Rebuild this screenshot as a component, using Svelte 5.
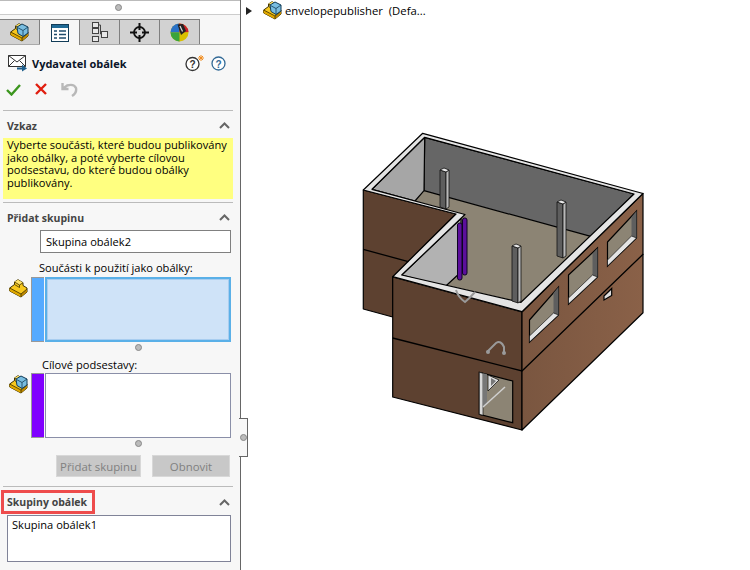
<script>
	const rows = ['Vyberte součásti, které budou publikovány', 'jako obálky, a poté vyberte cílovou', 'podsestavu, do které budou obálky', 'publikovány.']

	const pillars = [
		[440, 168, 449, 208],
		[557, 200, 566, 257],
		[512, 244, 521, 302]
	]

	const windows = [
		[529.5, 320, 558.5, 287, 315, 342],
		[568.5, 275, 597.5, 248, 277, 304],
		[607.5, 242, 636.5, 211, 238, 266]
	]

	const pts = (...p) => p.join(' ')
</script>

{#snippet block(cube)}
	<svg class="part" width="19" height="19" viewBox="0 0 19 19">
		<path d="M.7 9 L5.500 5.500 L5.500 3 L9 .7 L14 3.700 L14 6.500 L18 9 L18 13 L12 18 L.7 12 Z" fill="#f7c81e" stroke="#3d3000"/>
		<path d="M5.500 3 L10.500 6 L14 3.700 L9 .7 Z" fill="#ffe36a"/>
		<path d="M.7 9 L12 15 L12 18 L.7 12 Z" fill="#e0a800"/>
		<path d="M12 15 L18 10 L18 13 L12 18 Z" fill="#c08a00"/>
		<path d="M.7 9 L12 15 L18 10 M12 15 V18 M5.500 5.500 L10.500 8.500 V6 M5.500 3 L10.500 6 L14 3.700" fill="none" stroke="#3d3000" stroke-width=".8"/>
		{#if cube}
			<path d="M7 4 L12 1 L18 4 V10 L13 13.500 L8 10.500 Z" fill="#79bde0" stroke="#123c58"/>
			<path d="M7.500 4.500 L13 7.500 L18 4 M13 7.500 V13.500" fill="none" stroke="#123c58" stroke-width=".8"/>
		{/if}
	</svg>
{/snippet}

{#snippet chevron()}
	<svg class="chev" width="11" height="7" viewBox="0 0 11 7"><path d="M1 6 L5.500 1.500 L10 6" fill="none" stroke="#666" stroke-width="2"/></svg>
{/snippet}

{#snippet mate(x, y)}
	<path d="M{x} {y + 12} L{x + 9} {y + 3} Q{x + 14} {y} {x + 17} {y + 7} L{x + 17} {y + 12}" fill="none" stroke="#9a9a9a" stroke-width="2"/>
	<circle cx={x + 1} cy={y + 12} r="2" fill="#9a9a9a"/>
	<circle cx={x + 17} cy={y + 13} r="2" fill="#9a9a9a"/>
{/snippet}

<div class="app">
	<aside class="panel">
		<div class="grip"><span class="dot"></span></div>

		<div class="tabs">
			<div class="tab">
				{@render block(true)}
			</div>
			<div class="tab active">
				<svg width="18" height="18" viewBox="0 0 18 18">
					<rect x=".5" y=".5" width="17" height="17" fill="#fff" stroke="#123c58"/>
					<rect x="1" y="1" width="16" height="3" fill="#1f6a96"/>
					<path d="M3 7H6M8 7H15M3 10.500H6M8 10.500H15M3 14H6M8 14H15" stroke="#1f4c6c" stroke-width="1.600"/>
				</svg>
			</div>
			<div class="tab">
				<svg width="16" height="20" viewBox="0 0 16 20" fill="#e8e8e8" stroke="#444">
					<rect x=".5" y=".5" width="6" height="5"/>
					<rect x=".5" y="6.500" width="6" height="5"/>
					<rect x=".5" y="14.500" width="6" height="5"/>
					<rect x="9.500" y="9.500" width="6" height="6"/>
					<path d="M6.500 3H8.500V12H9.500" fill="none"/>
				</svg>
			</div>
			<div class="tab">
				<svg width="19" height="19" viewBox="0 0 19 19" fill="none" stroke="#111">
					<circle cx="9.500" cy="9.500" r="5.500" stroke-width="1.800"/>
					<path d="M9.500 0V7M9.500 12V19M0 9.500H7M12 9.500H19" stroke-width="2"/>
				</svg>
			</div>
			<div class="tab">
				<svg width="19" height="19" viewBox="0 0 19 19">
					<circle cx="9.500" cy="9.500" r="9" fill="#d8c000"/>
					<path d="M9.500 9.500 L.5 9.500 A9 9 0 0 1 9 .5 Z" fill="#2a72c8"/>
					<path d="M9.500 9.500 L9 .5 A9 9 0 0 1 18.500 9 Z" fill="#c81e28"/>
					<path d="M9.500 9.500 L.5 9.500 A9 9 0 0 0 9.500 18.500 Z" fill="#3aa43a"/>
					<path d="M7.500 1.500 L13 1 L16 8 L11 12 Z" fill="#222"/>
					<path d="M10 3 L12.500 8.500" stroke="#ddd" stroke-width="1.200"/>
				</svg>
			</div>
		</div>

		<header class="title">
			<svg width="20" height="18" viewBox="0 0 20 18">
				<path d="M.5 1.500H17.500V12.500H.5Z" fill="#fff" stroke="#333"/>
				<path d="M.5 1.500L9 8L17.500 1.500M.5 12.500L6.500 6.500M17.500 12.500L11.500 6.500" fill="none" stroke="#333"/>
				<path d="M9 13.500H14V10.500L19 14.500L14 17.500V15.500H9Z" fill="#1f5f8c"/>
			</svg>
			<h1>Vydavatel obálek</h1>
			<span class="help">
				<svg width="20" height="18" viewBox="0 0 20 18">
					<circle cx="7.500" cy="10" r="6.500" fill="#fff" stroke="#333" stroke-width="1.300"/>
					<text x="7.500" y="14" class="q dark">?</text>
					<path d="M16 1V7M13 4H19M14 2L18 6M18 2L14 6" stroke="#f08c1e"/>
				</svg>
				<svg width="15" height="15" viewBox="0 0 15 15">
					<circle cx="7.500" cy="7.500" r="6.500" fill="#fff" stroke="#336a96" stroke-width="1.300"/>
					<text x="7.500" y="11.500" class="q blue">?</text>
				</svg>
			</span>
		</header>

		<div class="actions">
			<svg width="15" height="13" viewBox="0 0 15 13"><path d="M1 7 L5.500 11.500 L14 2" fill="none" stroke="#3c961e" stroke-width="2.400"/></svg>
			<svg width="12" height="12" viewBox="0 0 12 12"><path d="M1 1 L11 11 M11 1 L1 11" fill="none" stroke="#e01e10" stroke-width="2.400"/></svg>
			<svg width="17" height="15" viewBox="0 0 17 15"><path d="M1.500 1V7H7.500M2 6.500 L6 3.500 Q13 1.500 15 6 Q16 11 11 14" fill="none" stroke="#b8b8b8" stroke-width="2.400"/></svg>
		</div>

		<section class="sec first">
			<div class="head top"><span>Vzkaz</span>{@render chevron()}</div>
			<div class="note">
				{#each rows as r}<div>{r}</div>{/each}
			</div>
		</section>

		<section class="sec add">
			<div class="head"><span>Přidat skupinu</span>{@render chevron()}</div>
			<div class="field">Skupina obálek2</div>

			<div class="label">Součásti k použití jako obálky:</div>
			<div class="pick">
				{@render block(false)}
				<i class="swatch sky"></i>
				<div class="list focus"></div>
			</div>
			<div class="sash"><span class="dot"></span></div>

			<div class="label second">Cílové podsestavy:</div>
			<div class="pick">
				{@render block(true)}
				<i class="swatch violet"></i>
				<div class="list"></div>
			</div>
			<div class="sash"><span class="dot"></span></div>

			<div class="buttons">
				<button disabled class="b1">Přidat skupinu</button>
				<button disabled class="b2">Obnovit</button>
			</div>
		</section>

		<section class="sec last">
			<div class="head">
				<span class="mark">Skupiny obálek</span>{@render chevron()}
			</div>
			<div class="result">Skupina obálek1</div>
		</section>

		<div class="handle"><span class="dot"></span></div>
	</aside>

	<main class="view">
		<div class="tree">
			<svg width="6" height="8" viewBox="0 0 6 8"><path d="M0 0 L6 4 L0 8Z" fill="#222"/></svg>
			{@render block(true)}
			<span>envelopepublisher&nbsp; (Defa...</span>
		</div>

		<svg class="model" width="509" height="570" viewBox="241 0 509 570">
			<defs>
				<linearGradient id="side" x1="0" y1="0" x2="1" y2="0">
					<stop offset="0" stop-color="#7a5640"/>
					<stop offset="1" stop-color="#8a6148"/>
				</linearGradient>
			</defs>
			<g stroke="#000" stroke-width="1.200" stroke-linejoin="round">
				<polygon points="363.300,190 456,214 392.700,277 392.700,317 363.300,309" fill="#5d4130"/>
				<polygon points="392.700,277 522,312 522,430 392.700,397" fill="#5d4130"/>
				<polygon points="522,312 643,193.500 643,312.700 522,430" fill="url(#side)"/>

				<polygon points="415,201 424,190.700 591.700,236.700 634,194 521,302.300 401.700,275 465,214.500" fill="#8c8474" stroke="none"/>
				<polygon points="424.700,137.300 634,194 591.700,236.700 424,190.700" fill="#666"/>
				<polygon points="424.700,137.300 372,189.300 415,201 424,190.700" fill="#a6a6a6"/>
				<polygon points="461,218.500 401.700,275 445,286.700 461,272" fill="#b2b2b2"/>

				<path fill-rule="evenodd" fill="#e4e4e4" d="M422.700 133.300 L643 193.500 L522 311.700 L392.700 276.700 L456 214 L363.300 190 Z M424.700 137.300 L372 189.300 L465 214.500 L401.700 275 L521 302.300 L634 194 Z"/>
			</g>

			<g stroke="#000" stroke-width="1">
				<path d="M363.300 249.300 L408.300 261.700 M392.700 338 L522 371 L643.300 254" fill="none" stroke-width="1.300"/>
			</g>

			{#each pillars as [x1, y1, x2, y2]}
				<g stroke="#111" stroke-width=".8">
					<polygon points={pts(x1, y1 + 2, x1 + 6, y1 + 4, x1 + 6, y2 + 1, x1, y2 - 1)} fill="#5e5e5e"/>
					<polygon points={pts(x1 + 6, y1 + 4, x2, y1 + 2, x2, y2 - 1, x1 + 6, y2 + 1)} fill="#b8b8b8"/>
					<polygon points={pts(x1, y1 + 2, x1 + 4, y1, x2, y1 + 2, x1 + 6, y1 + 4)} fill="#e8e8e8"/>
				</g>
			{/each}

			<g stroke="#0c0420" stroke-width="1">
				<rect x="462.500" y="218" width="4.500" height="57" rx="2" fill="#5c0f9c"/>
				<rect x="457.500" y="223" width="4.500" height="57" rx="2" fill="#5c0f9c"/>
			</g>

			{#each windows as [x1, y1, x2, y2, y3, y4]}
				<polygon points={pts(x1, y1, x2, y2, x2, y3, x1, y4)} fill="#8c8474" stroke="#000" stroke-width="1.200"/>
				<polygon points={pts(x2 - 5, y2 + 6, x2, y2, x2, y3, x2 - 5, y3 - 1)} fill="#5e5e5e"/>
				<polygon points={pts(x1, y4, x2, y3, x2 - 5, y3 - 2, x1, y4 - 6)} fill="#e4e4e4" stroke="#000" stroke-width=".6"/>
			{/each}

			<polygon points="604,296 611.700,288.500 611.700,295.500 604,300" fill="#ddd" stroke="#000" stroke-width="1.200"/>

			<polygon points="479.300,372.300 512.700,381 512.700,422.700 479.300,414.300" fill="#8c8474" stroke="#000" stroke-width="1.200"/>
			<polygon points="479.300,372.300 483,373.300 483,415.300 479.300,414.300" fill="#d8d8d8" stroke="#000" stroke-width=".6"/>
			<polygon points="483,373.300 487,374.300 487,404 483,408" fill="#777"/>
			<polygon points="488,375 488,391 499,380" fill="#ddd" stroke="#000" stroke-width=".7"/>
			<polygon points="491,378 491,386 496,381" fill="#777"/>
			<path d="M483 407 L505 387" stroke="#d0d0d0" stroke-width="1.500"/>

			{@render mate(487, 340)}
			<path d="M456 290 Q458 297 465 302 Q470 298 475 292" fill="none" stroke="#9a9a9a" stroke-width="2"/>
		</svg>
	</main>
</div>

<style>
	:global(body) {
		margin: 0;
		background: #fff;
	}

	.app {
		display: flex;
		width: 750px;
		height: 570px;
		overflow: hidden;
		font-family: "Open Sans", "Liberation Sans", sans-serif;
		font-size: 11.1px;
		color: #000;
	}

	.panel {
		position: relative;
		box-sizing: border-box;
		width: 241px;
		height: 570px;
		flex: none;
		background: #f7f7f7;
		border-right: 1px solid #666;
		display: flex;
		flex-direction: column;
	}

	.dot {
		display: block;
		width: 5px;
		height: 5px;
		border-radius: 50%;
		background: #bbb;
		border: 1px solid #888;
	}

	.grip {
		height: 15px;
		box-sizing: border-box;
		border-top: 1px solid #bbb;
		border-bottom: 1px solid #ccc;
		margin-bottom: 4px;
		display: flex;
		align-items: center;
		justify-content: center;
		padding-right: 4px;
		background: #fff;
	}

	.tabs {
		display: flex;
		height: 26px;
		box-sizing: border-box;
		border-bottom: 1px solid #aaa;
	}

	.tab {
		box-sizing: border-box;
		width: 40px;
		height: 25px;
		background: #d2d2d2;
		border: 1px solid #808080;
		border-left: 0;
		border-bottom: 0;
		display: flex;
		align-items: center;
		justify-content: center;
	}

	.tab.active {
		background: #f7f7f7;
		height: 26px;
	}

	.title {
		display: flex;
		align-items: center;
		height: 20px;
		margin: 8px 0 0 8px;
	}

	h1 {
		font-size: 11px;
		font-weight: 700;
		margin: 0 0 0 4px;
		color: #0a1428;
	}

	.help {
		margin-left: auto;
		margin-right: 14px;
		display: flex;
		align-items: center;
		gap: 6px;
	}

	.q {
		font-family: "Liberation Sans", sans-serif;
		font-size: 10px;
		font-weight: 700;
		text-anchor: middle;
	}

	.dark {
		fill: #333;
	}

	.blue {
		fill: #336a96;
	}

	.actions {
		display: flex;
		align-items: center;
		gap: 14px;
		margin: 8px 0 0 6px;
		height: 16px;
	}

	.sec {
		margin: 0 7px 0 3px;
		border-top: 1px solid #bbb;
	}

	.first {
		margin-top: 13px;
	}

	.head {
		box-sizing: border-box;
		display: flex;
		align-items: center;
		justify-content: space-between;
		height: 27px;
		padding: 2px 2px 0 4px;
		font-size: 10.5px;
		font-weight: 700;
		color: #444;
	}

	.chev {
		margin-right: 1px;
	}

	.note {
		background: #ffff80;
		height: 61px;
		padding: 1px 4px 0;
		box-sizing: border-box;
		line-height: 12.700px;
		white-space: nowrap;
	}

	.add {
		margin-top: 3px;
		margin-right: 7px;
		height: 283px;
	}

	.field {
		box-sizing: border-box;
		margin-left: 37px;
		margin-right: 2px;
		height: 23px;
		border: 1px solid #808080;
		background: #fff;
		padding: 3px 5px;
	}

	.label {
		margin: 8px 0 0 36px;
		height: 16px;
		line-height: 14px;
	}

	.second {
		margin: 8px 0 0 39px;
		height: 14px;
		line-height: 12px;
	}

	.pick {
		display: flex;
		align-items: flex-start;
		margin-left: 6px;
	}

	.part {
		flex: none;
	}

	.pick .part {
		margin-top: 2px;
		margin-right: 3px;
	}

	.swatch {
		width: 13px;
		height: 65px;
		flex: none;
		box-sizing: border-box;
		border: 1px solid #999;
		border-right: 0;
	}

	.sky {
		background: #55aaff;
	}

	.violet {
		background: #8000ff;
	}

	.list {
		box-sizing: border-box;
		margin-left: 1px;
		width: 186px;
		height: 65px;
		background: #fff;
		border: 1px solid #8a8fa8;
	}

	.focus {
		background: #cfe3f8;
		border: 2px solid #5ab0e8;
		outline: 1px solid #a8cdf0;
		outline-offset: -3px;
	}

	.sash {
		display: flex;
		justify-content: center;
		margin: 1px 0 0 0;
		height: 8px;
		align-items: center;
	}

	.sash .dot {
		margin-left: 40px;
	}

	.buttons {
		display: flex;
		gap: 11px;
		margin: 8px 0 0 53px;
	}

	button {
		box-sizing: border-box;
		height: 22px;
		background: #c8c8c8;
		border: 1px solid #d8d8d8;
		color: #808080;
		font: inherit;
		font-size: 11.4px;
		padding: 0;
	}

	.b1 {
		width: 85px;
	}

	.b2 {
		width: 78px;
	}

	.last .head {
		height: 28px;
	}

	.mark {
		outline: 3px solid #ee4c4c;
		outline-offset: -1px;
		padding: 3px 6px 3px 4px;
		margin-left: -4px;
	}

	.result {
		box-sizing: border-box;
		margin-left: 4px;
		margin-right: 2px;
		height: 47px;
		background: #fff;
		border: 1px solid #808398;
		padding: 1px 4px;
	}

	.handle {
		position: absolute;
		left: 239px;
		top: 418px;
		width: 8px;
		height: 37px;
		background: #f7f7f7;
		border: 1px solid #666;
		border-left: 0;
		display: flex;
		align-items: center;
		justify-content: center;
	}

	.view {
		position: relative;
		flex: 1;
	}

	.tree {
		position: absolute;
		left: 5px;
		top: 1px;
		display: flex;
		align-items: center;
		font-size: 11.3px;
	}

	.tree svg:first-child {
		margin-right: 11px;
	}

	.tree .part {
		margin-right: 3px;
	}

	.model {
		display: block;
	}
</style>
